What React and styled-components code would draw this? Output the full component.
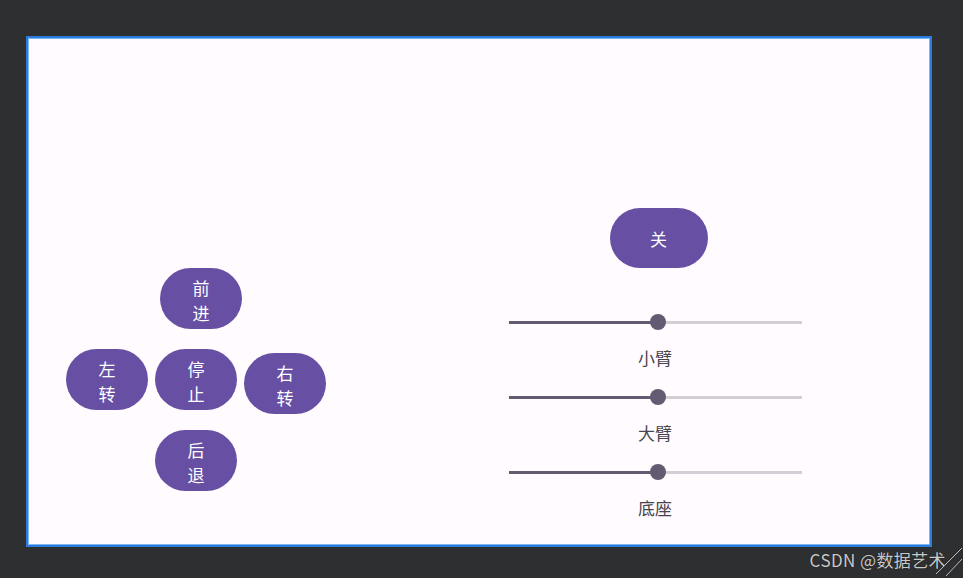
import React from "react";
import styled, { createGlobalStyle } from "styled-components";

const GlobalStyle = createGlobalStyle`
  html, body {
    margin: 0;
    padding: 0;
    background: #2e2f31;
  }
  body {
    font-family: "Noto Sans CJK SC", "Noto Sans", sans-serif;
  }
`;

const Screen = styled.div`
  position: relative;
  width: 963px;
  height: 578px;
  padding: 36px 0 0 26px;
  box-sizing: border-box;
  overflow: hidden;
`;

const Frame = styled.div`
  width: 906px;
  height: 511px;
  box-sizing: border-box;
  border: 2px solid #2a7ddc;
  box-shadow: inset 0 0 0 1px #7fb6f2;
  background: #fffbfe;
  display: grid;
  grid-template-columns: 380px 492px;
  padding: 1px;
`;

const LeftPane = styled.div`
  padding: 229px 0 0 37px;
`;

const Pad = styled.div`
  display: grid;
  grid-template-columns: repeat(3, 82px);
  grid-template-rows: 61px 61px 61px;
  column-gap: 7px;
  row-gap: 20px;
`;

const PadButton = styled.button`
  grid-column: ${({ $col }) => $col};
  grid-row: ${({ $row }) => $row};
  width: 82px;
  height: 61px;
  margin-left: ${({ $shiftX }) => $shiftX || 0}px;
  margin-top: ${({ $shiftY }) => $shiftY || 0}px;
  border: none;
  border-radius: 31px;
  background: #6750a4;
  color: #ffffff;
  font-family: "Noto Sans CJK SC", sans-serif;
  font-size: 17px;
  line-height: 25px;
  padding: 3px 30px 0;
  display: flex;
  align-items: center;
  justify-content: center;
  text-align: center;
`;

const RightPane = styled.div`
  display: flex;
  flex-direction: column;
  align-items: center;
  padding-top: 169px;
`;

const PowerButton = styled.button`
  width: 98px;
  height: 60px;
  margin-left: 7px;
  border: none;
  border-radius: 30px;
  background: #6750a4;
  color: #ffffff;
  font-family: "Noto Sans CJK SC", sans-serif;
  font-size: 17px;
  margin-bottom: 44px;
`;

const SliderGroup = styled.div`
  display: flex;
  flex-direction: column;
  align-items: center;
  margin-bottom: 17px;
`;

const SliderBox = styled.div`
  position: relative;
  width: 293px;
  height: 20px;
  display: flex;
  align-items: center;
`;

const TrackActive = styled.div`
  height: 3px;
  background: #625b71;
`;

const TrackRest = styled.div`
  flex: 1;
  height: 3px;
  background: #d3ced6;
`;

const Thumb = styled.div`
  position: absolute;
  top: 2px;
  width: 16px;
  height: 16px;
  margin-left: -8px;
  border-radius: 50%;
  background: #625b71;
`;

const SliderLabel = styled.div`
  margin-top: 14px;
  font-size: 17px;
  line-height: 24px;
  color: #49454f;
`;

const Watermark = styled.div`
  position: absolute;
  right: 17px;
  bottom: 6px;
  font-family: "Noto Sans CJK SC", "Liberation Sans", sans-serif;
  font-size: 17px;
  color: #c9c9c9;
  text-shadow: 0 0 1px rgba(0, 0, 0, 0.6);
  letter-spacing: 0.4px;
`;

const Grip = styled.svg`
  position: absolute;
  right: 0;
  bottom: 0;
`;

const Slider = ({ value }) => (
  <SliderBox>
    <TrackActive style={{ width: `${value}%` }} />
    <TrackRest />
    <Thumb style={{ left: `${value}%` }} />
  </SliderBox>
);

const pad = [
  { text: "前进", col: 2, row: 1, shiftX: 5 },
  { text: "左转", col: 1, row: 2 },
  { text: "停止", col: 2, row: 2 },
  { text: "右转", col: 3, row: 2, shiftY: 4 },
  { text: "后退", col: 2, row: 3 },
];

const sliders = ["小臂", "大臂", "底座"];

export default function App() {
  return (
    <>
      <GlobalStyle />
      <Screen>
        <Frame>
          <LeftPane>
            <Pad>
              {pad.map((b) => (
                <PadButton
                  key={b.text}
                  $col={b.col}
                  $row={b.row}
                  $shiftX={b.shiftX}
                  $shiftY={b.shiftY}
                >
                  {b.text}
                </PadButton>
              ))}
            </Pad>
          </LeftPane>
          <RightPane>
            <PowerButton>关</PowerButton>
            {sliders.map((name) => (
              <SliderGroup key={name}>
                <Slider value={51} />
                <SliderLabel>{name}</SliderLabel>
              </SliderGroup>
            ))}
          </RightPane>
        </Frame>
        <Watermark>CSDN @数据艺术</Watermark>
        <Grip width="30" height="32" viewBox="0 0 30 32">
          <line x1="29" y1="2" x2="3" y2="28" stroke="#bdbdbd" strokeWidth="1" />
          <line x1="29" y1="13" x2="13" y2="30" stroke="#bdbdbd" strokeWidth="1" />
        </Grip>
      </Screen>
    </>
  );
}
